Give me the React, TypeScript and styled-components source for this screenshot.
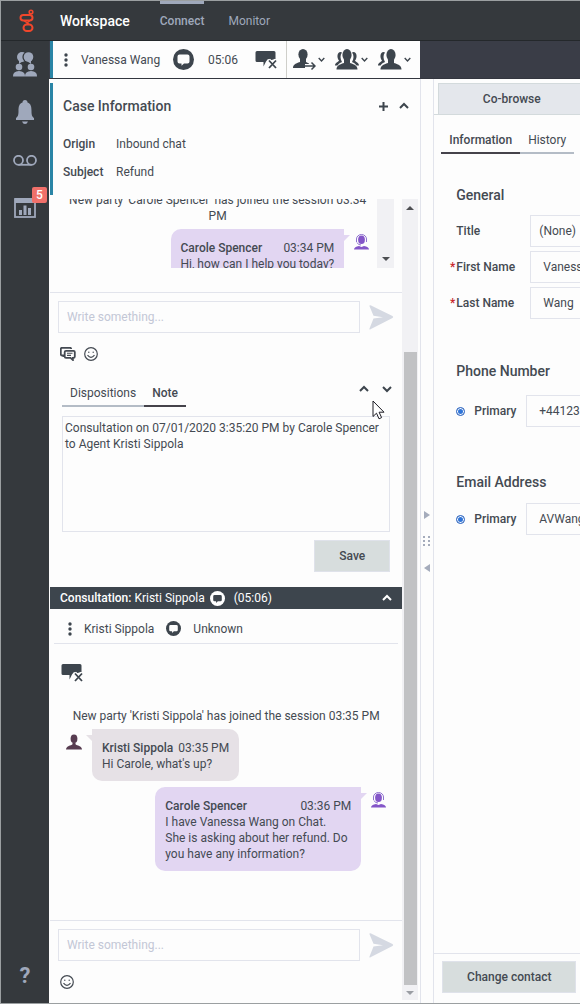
import React, { useLayoutEffect, useRef } from "react";
import styled, { createGlobalStyle, css } from "styled-components";

const ink = "#444a52";
const slate = "#3d454d";
const line = "#e2e4ec";
const muted = "#9fa8bb";

const GlobalStyle = createGlobalStyle`
  *, *::before, *::after { box-sizing: border-box; }
  body {
    margin: 0;
    background: #fdfdfd;
    color: ${ink};
    font: 400 12px/16px Roboto, "Liberation Sans", sans-serif;
  }
  h1, h2, p, dl, dd { margin: 0; }
  button, input, select, textarea { font: inherit; color: inherit; margin: 0; border-radius: 0; }
  svg { display: block; flex: none; }
`;

const Page = styled.div`
  position: relative;
  display: flex;
  flex-direction: column;
  min-height: 100vh;
  overflow: hidden;
  border: 1px solid #9b9fa1;
  border-right: 0;
`;

const Header = styled.header`
  display: flex;
  align-items: center;
  height: 40px;
  flex: none;
  background: #35393d;
  border-bottom: 1px solid #24282b;
`;

const LogoBox = styled.div`
  width: 59px;
  padding-left: 17px;
`;

const Product = styled.h1`
  color: #fff;
  font-size: 14px;
  line-height: 20px;
  font-weight: 500;
  margin-right: 30px;
`;

const NavLink = styled.a<{ $active?: boolean }>`
  display: flex;
  align-items: center;
  align-self: stretch;
  margin-right: 24px;
  color: ${muted};
  text-decoration: none;
  ${(p) => p.$active && css`
    font-weight: 500;
    box-shadow: inset 0 3px ${muted};
  `}
`;

const Body = styled.div`
  display: flex;
  flex: 1;
  min-height: 0;
`;

const Sidebar = styled.nav`
  display: flex;
  flex-direction: column;
  gap: 2px;
  width: 48px;
  flex: none;
  background: #35393d;
`;

const IconButton = styled.button`
  display: flex;
  align-items: center;
  justify-content: center;
  padding: 0;
  border: 0;
  background: none;
  color: ${slate};
`;

const SideButton = styled(IconButton)<{ $last?: boolean }>`
  position: relative;
  height: 46px;
  color: ${muted};
  ${(p) => p.$last && css`
    margin-top: auto;
    margin-bottom: 4px;
    font-size: 22px;
    font-weight: 700;
  `}
`;

const Badge = styled.span`
  position: absolute;
  top: 2px;
  right: 2px;
  width: 15px;
  border-radius: 2px;
  background: #f0706a;
  color: #fff;
  font-weight: 500;
`;

const Workarea = styled.div`
  display: flex;
  flex-direction: column;
  flex: 1;
  min-width: 0;
`;

const Strip = styled.div`
  display: flex;
  height: 38px;
  flex: none;
  padding-left: 1px;
  background: #3a3d47;
  border-bottom: 1px solid #33363f;
`;

const Toolbar = styled.div`
  display: flex;
  align-items: center;
  flex: 367 0 0;
  min-width: 0;
  background: #fdfdfd;
  border-left: 3px solid #2a85a6;
`;

const StripRest = styled.div`
  flex: 160 0 0;
`;

const MenuButton = styled(IconButton)`
  padding-left: 11px;
`;

const CaseName = styled.span`
  width: 92px;
  margin-left: 13px;
  white-space: nowrap;
`;

const Timer = styled.span`
  width: 47px;
  margin-left: 14px;
`;

const Actions = styled.div`
  display: flex;
  align-items: center;
  align-self: stretch;
  gap: 10px;
  margin-left: 9px;
  padding-left: 6px;
  border-left: 1px solid #cfcfca;
`;

const Action = styled(IconButton)`
  gap: 2px;
`;

const Columns = styled.div`
  display: flex;
  flex: 1;
`;

const CasePanel = styled.main`
  display: flex;
  flex-direction: column;
  flex: 371 0 0;
  min-width: 0;
  padding-left: 1px;
`;

const CaseInfo = styled.section`
  margin: 4px 0;
  padding: 0 11px 9px 10px;
  border-left: 3px solid #2a85a6;
`;

const CaseHead = styled.div`
  display: flex;
  align-items: center;
  gap: 11px;
  height: 46px;
  margin-bottom: 1px;
`;

const Heading = styled.h2`
  flex: 1;
  font-size: 14px;
  line-height: 20px;
  font-weight: 500;
`;

const Facts = styled.dl`
  display: grid;
  grid-template-columns: 53px 1fr;
  line-height: 28px;
`;

const FactName = styled.dt`
  font-weight: 500;
`;

const Scroller = styled.div`
  display: flex;
  flex: 1;
`;

const Flow = styled.div`
  display: flex;
  flex-direction: column;
  flex: 1;
  min-width: 0;
`;

const ScrollBar = styled.div<{ $outer?: boolean }>`
  display: flex;
  flex-direction: column;
  align-items: center;
  width: 17px;
  flex: none;
  background: #f1f1f4;
  ${(p) => p.$outer && css`
    width: 16px;
    margin: 0 2px 3px 0;
    padding: 7px 0 5px;
  `}
`;

const Thumb = styled.div`
  flex: 1;
  width: 13px;
  margin: 142px 0 6px;
  background: #c1c2c4;
`;

const Arrow = styled.div<{ $dir: "up" | "down" | "left" | "right"; $color?: string }>`
  width: 0;
  height: 0;
  border: 4px solid transparent;
  ${(p) => {
    const c = p.$color ?? "#4d4f52";
    if (p.$dir === "up") return `border-top: 0; border-bottom-color: ${c};`;
    if (p.$dir === "down") return `border-bottom: 0; border-top-color: ${c};`;
    if (p.$dir === "left") return `border-left: 0; border-right: 6px solid ${c};`;
    return `border-right: 0; border-left: 6px solid ${c};`;
  }}
`;

const LogFrame = styled.div`
  display: flex;
  height: 69px;
  margin: 0 8px 24px;
`;

const EndArrow = styled.div`
  margin: auto 0 7px;
`;

const Log = styled.div`
  flex: 1;
  min-width: 0;
  height: 69px;
  overflow: hidden;
`;

const SystemLine = styled.p`
  margin-bottom: 5px;
  padding: 0 8px;
  text-align: center;
`;

const Message = styled.div<{ $own?: boolean }>`
  display: flex;
  flex-direction: ${(p) => (p.$own ? "row-reverse" : "row")};
  gap: 10px;
  padding: 0 8px;
  margin-bottom: 6px;
`;

const Avatar = styled.span`
  padding-top: 5px;
`;

const Bubble = styled.div<{ $own?: boolean }>`
  position: relative;
  max-width: 206px;
  padding: 11px 10px 9px;
  border-radius: ${(p) => (p.$own ? "10px 0 10px 10px" : "0 10px 10px 10px")};
  background: ${(p) => (p.$own ? "#e2d6f2" : "#e6e1e6")};
  &::after {
    content: "";
    position: absolute;
    top: 6px;
    border-top: 6px solid ${(p) => (p.$own ? "#e2d6f2" : "#e6e1e6")};
    ${(p) => (p.$own
      ? "left: 100%; border-right: 6px solid transparent;"
      : "right: 100%; border-left: 6px solid transparent;")}
  }
`;

const BubbleHead = styled.div`
  display: flex;
  justify-content: space-between;
  gap: 5px;
  white-space: nowrap;
`;

const Composer = styled.form`
  border-top: 1px solid ${line};
  padding: 8px 8px 0;
`;

const ComposerRow = styled.div`
  display: flex;
  align-items: center;
  gap: 9px;
`;

const MessageInput = styled.input`
  flex: 1;
  min-width: 0;
  height: 32px;
  padding: 0 8px;
  border: 1px solid ${line};
  background: transparent;
  &::placeholder { color: #c3c7d6; opacity: 1; }
`;

const ComposerTools = styled.div`
  display: flex;
  align-items: center;
  gap: 8px;
  height: 42px;
  padding-left: 2px;
`;

const NoteBlock = styled.section`
  padding: 6px 12px 15px;
`;

const TabBar = styled.div`
  display: flex;
  align-items: flex-start;
`;

const Tab = styled.button<{ $active?: boolean }>`
  height: 26px;
  padding: 0 8px;
  border: 0;
  border-bottom: 2px solid ${(p) => (p.$active ? "#45434b" : "#b4bcc6")};
  background: none;
  font-weight: ${(p) => (p.$active ? 500 : 400)};
`;

const NoteMoves = styled.div`
  display: flex;
  gap: 13px;
  margin: 3px -2px 0 auto;
`;

const NoteText = styled.textarea`
  display: block;
  width: 100%;
  height: 116px;
  margin: 9px 0 8px;
  padding: 3px 2px;
  border: 1px solid ${line};
  background: transparent;
  resize: none;
  overflow: hidden;
`;

const Button = styled.button<{ $wide?: boolean }>`
  display: block;
  width: ${(p) => (p.$wide ? "134px" : "76px")};
  height: 32px;
  margin-left: auto;
  border: 1px solid #dfe2ea;
  background: #d7dddd;
  font-weight: 500;
  padding: 0;
`;

const ConsultBar = styled.div`
  display: flex;
  align-items: center;
  gap: 5px;
  height: 22px;
  padding: 0 10px;
  background: ${slate};
  color: #fff;
`;

const ConsultTime = styled.span`
  flex: 1;
  margin-left: 4px;
`;

const PartyRow = styled.div`
  display: flex;
  align-items: center;
  gap: 12px;
  height: 35px;
  margin: 0 4px;
  padding: 5px 14px 0;
  border-bottom: 1px solid ${line};
`;

const PartyTools = styled.div`
  padding: 20px 11px 26px;
`;

const ConsultLog = styled.div`
  flex: 1;
  padding: 0 8px 43px;
`;

const Splitter = styled.div`
  display: flex;
  flex-direction: column;
  align-items: center;
  justify-content: center;
  gap: 17px;
  width: 14px;
  flex: none;
  border: solid ${line};
  border-width: 0 1px;
`;

const ContactPanel = styled.aside`
  display: flex;
  flex-direction: column;
  flex: 146 0 0;
  min-width: 0;
  overflow: hidden;
`;

const CobrowseBar = styled.div`
  display: flex;
  padding: 4px 0 0 4px;
  border-bottom: 1px solid #d3dadc;
`;

const Cobrowse = styled.button`
  min-width: 147px;
  height: 31px;
  flex: 1 0 auto;
  border: 1px solid #d3dadc;
  border-bottom: 0;
  background: #e4e7ec;
  font-weight: 500;
`;

const ContactTabs = styled(TabBar)`
  padding: 13px 0 0 7px;
`;

const GroupTitle = styled(Heading)`
  white-space: nowrap;
`;

const Group = styled.section<{ $top: number; $gap: number }>`
  padding: ${(p) => p.$top}px 0 0 22px;
  ${GroupTitle} { margin-bottom: ${(p) => p.$gap}px; }
`;

const Field = styled.div`
  display: flex;
  align-items: center;
  margin-bottom: 4px;
`;

const FieldLabel = styled.label<{ $required?: boolean }>`
  position: relative;
  width: 74px;
  flex: none;
  font-weight: 500;
  white-space: nowrap;
  ${(p) => p.$required && css`
    &::before {
      content: "*";
      position: absolute;
      right: 100%;
      margin-right: 1px;
      color: #c8282c;
    }
  `}
`;

const controlStyle = css`
  flex: 1 0 140px;
  height: 32px;
  border: 1px solid ${line};
  background: transparent;
`;

const FieldInput = styled.input`
  ${controlStyle}
  padding: 0 12px;
`;

const FieldSelect = styled.select`
  ${controlStyle}
  appearance: none;
  padding: 0 8px;
`;

const Radio = styled.input`
  appearance: none;
  width: 9px;
  height: 9px;
  margin-right: 9px;
  flex: none;
  border: 1px solid #3f6fc0;
  border-radius: 50%;
  background: #2f74d8;
  box-shadow: inset 0 0 0 1px #fdfdfd;
`;

const RadioLabel = styled.label`
  width: 52px;
  flex: none;
  font-weight: 500;
`;

const ContactFoot = styled.div`
  margin-top: auto;
  padding: 7px 4px 10px 8px;
  border-top: 1px solid ${line};
`;

const FootButton = styled(Button)`
  margin: 0;
`;

const Pointer = styled.svg`
  position: absolute;
  left: 371px;
  top: 399px;
`;

const Strong = styled.strong`
  font-weight: 500;
`;

const Logo = () => (
  <svg width="18" height="26" viewBox="0 0 18 26" fill="none" stroke="#f0472c" strokeWidth="2">
    <circle cx="13" cy="4" r="1.8" strokeWidth="1.6" />
    <rect x="2.5" y="7" width="12" height="5.6" rx="2.8" />
    <path d="M6 12.6c2 2 4 2 5 4M12 12.6c-2 1-3 2-3 4" strokeWidth="1.4" />
    <rect x="5.5" y="16.4" width="9" height="6.6" rx="3.3" />
  </svg>
);

const Dots = () => (
  <svg width="4" height="14" viewBox="0 0 4 14" fill={slate}>
    <circle cx="2" cy="2" r="1.7" /><circle cx="2" cy="7" r="1.7" /><circle cx="2" cy="12" r="1.7" />
  </svg>
);

const ChatDisc = ({ size, disc = slate, mark = "#fdfdfd" }: { size: number; disc?: string; mark?: string }) => (
  <svg width={size} height={size} viewBox="0 0 21 21">
    <circle cx="10.5" cy="10.5" r="10.5" fill={disc} />
    <path d="M6.500 5.500h8a2 2 0 0 1 2 2v5a2 2 0 0 1-2 2h-3.500l-2.500 2.200v-2.200h-2a2 2 0 0 1-2-2v-5a2 2 0 0 1 2-2z" fill={mark} />
  </svg>
);

const EndChat = () => (
  <svg width="22" height="18" viewBox="0 0 22 18">
    <path d="M2 0h17q1.500 0 1.500 1.500V8l-4 1-3.500-1-2 2.500L8.500 15.500V11H2Q0.500 11 0.500 9.500v-8Q0.500 0 2 0z" fill={slate} />
    <path d="M13.500 9l7.500 8.500M21 9l-7.500 8.500" stroke="#fdfdfd" strokeWidth="4" />
    <path d="M14 9.500l7 7.500M21 9.500l-7 7.500" stroke={slate} strokeWidth="1.800" />
  </svg>
);

const Chevron = ({ up, size = 10 }: { up?: boolean; size?: number }) => (
  <svg width={size} height={size} viewBox="0 0 10 10" fill="none" stroke="currentColor" strokeWidth="2">
    <path d={up ? "M1 7l4-4 4 4" : "M1 3l4 4 4-4"} />
  </svg>
);

const PersonTransfer = () => (
  <svg width="23" height="22" viewBox="0 0 23 22" fill={slate}>
    <ellipse cx="10" cy="5.500" rx="4.600" ry="5.500" />
    <path d="M0 19c0-3 2-4.500 7-6V10h6v3l3 1.500V19z" />
    <path d="M12 17h10M18.500 13.500l3.500 3.500-3.500 3.500" fill="none" stroke="#fdfdfd" strokeWidth="4" />
    <path d="M12 17h10M18.500 13.500l3.500 3.500-3.500 3.500" fill="none" stroke={slate} strokeWidth="1.500" />
  </svg>
);

const PersonGroup = ({ right = true }: { right?: boolean }) => (
  <svg width="24" height="21" viewBox="0 0 24 21" fill={slate}>
    <path d="M5.500 3C2 3 1.500 9 4 11.500C3.500 13 0 13.500 0 16.500h2.500C4 14 6 13.500 7 13 5 10 5 6 7 3.500z" />
    {right && <path d="M18.500 3c3.500 0 4 6 1.500 8.500.5 1.500 4 2 4 5h-2.500C20 14 18 13.500 17 13c2-3 2-7 0-9.500z" />}
    <ellipse cx={right ? 12 : 13} cy="6" rx="4.600" ry="6" />
    <path
      d="M1.500 20.500c0-3.500 2.500-5 7.500-6.500v-3h6v3c5 1.500 7.500 3 7.500 6.500z"
      transform={right ? undefined : "translate(1 0)"}
    />
  </svg>
);

const Agent = () => (
  <svg width="15" height="16" viewBox="0 0 15 16" fill="#8456c8">
    <ellipse cx="7.500" cy="5.800" rx="3.400" ry="4.300" />
    <path d="M2.500 8V5a5 4.500 0 0 1 10 0v3" fill="none" stroke="#8f72cf" strokeWidth="1" />
    <path d="M3 8.500q1 2.500 4 2.500" fill="none" stroke="#8f72cf" strokeWidth="1" />
    <path d="M0 15.500c0-2 2-3 5-3.500l2.500 1L10 12c3 .5 5 1.500 5 3.500z" />
  </svg>
);

const Customer = () => (
  <svg width="16" height="16" viewBox="0 0 16 16" fill="#573c50">
    <ellipse cx="8" cy="4.800" rx="3.400" ry="4.300" />
    <path d="M0 15.500c0-2.500 2-3.500 5.500-4.500L6.500 10.200V8.500h3v1.700l1 .8c3.500 1 5.500 2 5.500 4.500z" />
  </svg>
);

const Send = () => (
  <svg width="25" height="25" viewBox="0 0 25 25" fill="#d5d9e2">
    <path d="M1.500.3L23.500 11q1.500 1 0 2L1.500 24.300Q0 25 .5 23.500L4.500 13.500 14 12.200 4.500 10.800.5 1.200Q.2 0 1.500.3z" />
  </svg>
);

const Smile = () => (
  <svg width="14" height="14" viewBox="0 0 14 14" fill="none" stroke={ink} strokeWidth="1.200">
    <circle cx="7" cy="7" r="6.300" />
    <path d="M3.500 8.200q3.500 4.300 7 0" />
    <circle cx="4.800" cy="5.200" r=".7" fill={ink} stroke="none" />
    <circle cx="9.200" cy="5.200" r=".7" fill={ink} stroke="none" />
  </svg>
);

const Replies = () => (
  <svg width="16" height="14" viewBox="0 0 16 14" fill="none" stroke={ink} strokeWidth="1.800">
    <path d="M3.500 10V8.500H2q-1.200 0-1.200-1.200V2Q.8.800 2 .8h8q1.200 0 1.200 1.200" />
    <path d="M6 3.800h7.500q1.300 0 1.300 1.200v4.500q0 1.300-1.300 1.300h-.6V13l-2.400-2.200H6q-1.300 0-1.300-1.300V5Q4.700 3.800 6 3.800z" />
    <path d="M7 6.300h5.500M7 8.400h4" strokeWidth="1.100" />
  </svg>
);

const Agents = () => (
  <svg width="24" height="25" viewBox="0 0 24 25" fill={muted}>
    <circle cx="9" cy="5" r="5" /><path d="M6 8v4l4-3z" />
    <circle cx="15" cy="5" r="5.600" fill="#35393d" /><circle cx="15.500" cy="5" r="4.800" /><path d="M18 8v4l-4-3z" />
    <circle cx="6" cy="15" r="3.300" /><path d="M0 24.500c0-4 2-5 6-5.500 4 .5 6 1.500 6 5.500z" />
    <circle cx="18" cy="15" r="3.300" /><path d="M12 24.500c0-4 2-5 6-5.500 4 .5 6 1.500 6 5.500z" />
  </svg>
);

const Bell = () => (
  <svg width="18" height="24" viewBox="0 0 18 24" fill={muted}>
    <path d="M9 0q2.500 0 2.500 2.500C15 3.500 15.500 7 15.500 11c0 4 .5 5.500 2.500 7v2H0v-2c2-1.500 2.500-3 2.500-7 0-4 .5-7.500 4-8.500Q6.500 0 9 0zM6 21.500h6q-1 2.500-3 2.500t-3-2.500z" />
  </svg>
);

const Voicemail = () => (
  <svg width="24" height="11" viewBox="0 0 24 11" fill="none" stroke={muted} strokeWidth="1.800">
    <circle cx="5.500" cy="5.300" r="4.500" /><circle cx="18.500" cy="5.300" r="4.500" /><path d="M5.500 9.800h13" />
  </svg>
);

const Stats = () => (
  <svg width="22" height="20" viewBox="0 0 22 20" fill={muted}>
    <rect x="1" y="1" width="20" height="18" fill="none" stroke={muted} strokeWidth="1.800" />
    <path d="M1 0h20v5H1zM5 12h3v5H5zM9.500 7.500h3V17h-3zM14 10h3v7h-3z" />
  </svg>
);

function Chat({ own, who, time, children }: { own?: boolean; who: string; time: string; children: React.ReactNode }) {
  return (
    <Message $own={own}>
      <Avatar>{own ? <Agent /> : <Customer />}</Avatar>
      <Bubble $own={own}>
        <BubbleHead><Strong>{who}</Strong><span>{time}</span></BubbleHead>
        <p>{children}</p>
      </Bubble>
    </Message>
  );
}

function Compose({ replies }: { replies?: boolean }) {
  return (
    <Composer onSubmit={(e) => e.preventDefault()}>
      <ComposerRow>
        <MessageInput aria-label="Message" placeholder="Write something..." />
        <IconButton aria-label="Send"><Send /></IconButton>
      </ComposerRow>
      <ComposerTools>
        {replies && <IconButton type="button" aria-label="Standard responses"><Replies /></IconButton>}
        <IconButton type="button" aria-label="Emoji"><Smile /></IconButton>
      </ComposerTools>
    </Composer>
  );
}

export default function App() {
  const log = useRef<HTMLDivElement>(null);
  useLayoutEffect(() => {
    if (log.current) log.current.scrollTop = 7;
  }, []);

  return (
    <>
      <GlobalStyle />
      <Page>
        <Header>
          <LogoBox><Logo /></LogoBox>
          <Product>Workspace</Product>
          <NavLink href="#connect" $active>Connect</NavLink>
          <NavLink href="#monitor">Monitor</NavLink>
        </Header>
        <Body>
          <Sidebar>
            <SideButton aria-label="Interactions"><Agents /></SideButton>
            <SideButton aria-label="Notifications"><Bell /></SideButton>
            <SideButton aria-label="Voicemail"><Voicemail /></SideButton>
            <SideButton aria-label="Statistics"><Stats /><Badge>5</Badge></SideButton>
            <SideButton $last>?</SideButton>
          </Sidebar>
          <Workarea>
            <Strip>
              <Toolbar>
                <MenuButton aria-label="Case menu"><Dots /></MenuButton>
                <CaseName>Vanessa Wang</CaseName>
                <ChatDisc size={21} />
                <Timer>05:06</Timer>
                <IconButton aria-label="End chat"><EndChat /></IconButton>
                <Actions>
                  <Action aria-label="Transfer"><PersonTransfer /><Chevron size={7} /></Action>
                  <Action aria-label="Conference"><PersonGroup /><Chevron size={7} /></Action>
                  <Action aria-label="Consult"><PersonGroup right={false} /><Chevron size={7} /></Action>
                </Actions>
              </Toolbar>
              <StripRest />
            </Strip>
            <Columns>
              <CasePanel>
                <CaseInfo>
                  <CaseHead>
                    <Heading>Case Information</Heading>
                    <IconButton aria-label="Add">
                      <svg width="9" height="9" viewBox="0 0 9 9" stroke={slate} strokeWidth="2"><path d="M4.500 0v9M0 4.500h9" /></svg>
                    </IconButton>
                    <IconButton aria-label="Collapse case information"><Chevron up /></IconButton>
                  </CaseHead>
                  <Facts>
                    <FactName>Origin</FactName><dd>Inbound chat</dd>
                    <FactName>Subject</FactName><dd>Refund</dd>
                  </Facts>
                </CaseInfo>
                <Scroller>
                  <Flow>
                    <LogFrame>
                      <Log ref={log}>
                        <SystemLine>New party 'Carole Spencer' has joined the session 03:34 PM</SystemLine>
                        <Chat own who="Carole Spencer" time="03:34 PM">Hi, how can I help you today?</Chat>
                      </Log>
                      <ScrollBar>
                        <EndArrow><Arrow $dir="down" /></EndArrow>
                      </ScrollBar>
                    </LogFrame>
                    <Compose replies />
                    <NoteBlock>
                      <TabBar>
                        <Tab>Dispositions</Tab>
                        <Tab $active>Note</Tab>
                        <NoteMoves>
                          <IconButton aria-label="Previous"><Chevron up /></IconButton>
                          <IconButton aria-label="Next"><Chevron /></IconButton>
                        </NoteMoves>
                      </TabBar>
                      <NoteText aria-label="Note" defaultValue="Consultation on 07/01/2020 3:35:20 PM by Carole Spencer to Agent Kristi Sippola" />
                      <Button>Save</Button>
                    </NoteBlock>
                    <ConsultBar>
                      <span><Strong>Consultation:</Strong> Kristi Sippola</span>
                      <ChatDisc size={15} disc="#fff" mark={slate} />
                      <ConsultTime>(05:06)</ConsultTime>
                      <Chevron up />
                    </ConsultBar>
                    <PartyRow>
                      <Dots />
                      <span>Kristi Sippola</span>
                      <ChatDisc size={15} />
                      <span>Unknown</span>
                    </PartyRow>
                    <PartyTools>
                      <IconButton aria-label="End consultation"><EndChat /></IconButton>
                    </PartyTools>
                    <ConsultLog>
                      <SystemLine>New party 'Kristi Sippola' has joined the session 03:35 PM</SystemLine>
                      <Chat who="Kristi Sippola" time="03:35 PM">Hi Carole, what's up?</Chat>
                      <Chat own who="Carole Spencer" time="03:36 PM">
                        I have Vanessa Wang on Chat.<br />She is asking about her refund. Do you have any information?
                      </Chat>
                    </ConsultLog>
                    <Compose />
                  </Flow>
                  <ScrollBar $outer>
                    <Arrow $dir="up" />
                    <Thumb />
                    <Arrow $dir="down" $color="#9a9da3" />
                  </ScrollBar>
                </Scroller>
              </CasePanel>
              <Splitter>
                <Arrow $dir="right" $color="#a5acbc" />
                <svg width="8" height="11" viewBox="0 0 8 11" fill="#a5acbc">
                  <path d="M0 0h2v2H0zM5 0h2v2H5zM0 4h2v2H0zM5 4h2v2H5zM0 8h2v2H0zM5 8h2v2H5z" />
                </svg>
                <Arrow $dir="left" $color="#a5acbc" />
              </Splitter>
              <ContactPanel>
                <CobrowseBar><Cobrowse>Co-browse</Cobrowse></CobrowseBar>
                <ContactTabs>
                  <Tab $active>Information</Tab>
                  <Tab>History</Tab>
                </ContactTabs>
                <Group $top={31} $gap={10}>
                  <GroupTitle>General</GroupTitle>
                  <Field>
                    <FieldLabel htmlFor="title">Title</FieldLabel>
                    <FieldSelect id="title"><option>(None)</option></FieldSelect>
                  </Field>
                  <Field>
                    <FieldLabel htmlFor="first" $required>First Name</FieldLabel>
                    <FieldInput id="first" defaultValue="Vanessa" />
                  </Field>
                  <Field>
                    <FieldLabel htmlFor="last" $required>Last Name</FieldLabel>
                    <FieldInput id="last" defaultValue="Wang" />
                  </Field>
                </Group>
                <Group $top={38} $gap={14}>
                  <GroupTitle>Phone Number</GroupTitle>
                  <Field>
                    <Radio type="radio" id="phone" name="phone" defaultChecked />
                    <RadioLabel htmlFor="phone">Primary</RadioLabel>
                    <FieldInput aria-label="Phone number" defaultValue="+44123" />
                  </Field>
                </Group>
                <Group $top={41} $gap={11}>
                  <GroupTitle>Email Address</GroupTitle>
                  <Field>
                    <Radio type="radio" id="email" name="email" defaultChecked />
                    <RadioLabel htmlFor="email">Primary</RadioLabel>
                    <FieldInput aria-label="Email address" defaultValue="AVWang" />
                  </Field>
                </Group>
                <ContactFoot><FootButton $wide>Change contact</FootButton></ContactFoot>
              </ContactPanel>
            </Columns>
          </Workarea>
        </Body>
        <Pointer width="13" height="20" viewBox="0 0 13 20" fill="#fff" stroke="#1c1c24">
          <path d="M1 1v15.500l3.500-3.300 2.500 5.600 2.600-1.200-2.500-5.400H12z" />
        </Pointer>
      </Page>
    </>
  );
}
